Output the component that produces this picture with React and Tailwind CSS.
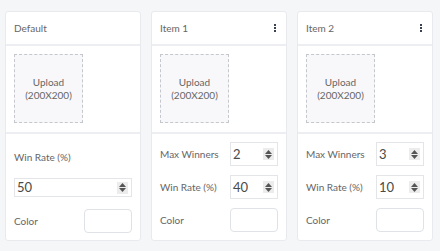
import React from "react";

function Spinner() {
  return (
    <div className="flex h-[12px] w-[11px] flex-col items-center justify-center gap-[1px] bg-[#ececec]">
      <svg width="7" height="4" viewBox="0 0 7 4"><path d="M0 4 L3.5 0 L7 4 Z" fill="#555" /></svg>
      <svg width="7" height="4" viewBox="0 0 7 4"><path d="M0 0 L3.5 4 L7 0 Z" fill="#555" /></svg>
    </div>
  );
}

function NumInput({ value, className }) {
  return (
    <div className={"flex items-center justify-between border border-[#e3e5e8] bg-white pl-[2px] pr-[3px] " + className}>
      <span className="text-[13px] leading-none text-[#4a4a4a]">{value}</span>
      <Spinner />
    </div>
  );
}

function Dots() {
  return (
    <div className="flex flex-col gap-[1px] pr-[1px]">
      <div className="h-[2px] w-[2px] bg-[#3a4250]" />
      <div className="h-[2px] w-[2px] bg-[#3a4250]" />
      <div className="h-[2px] w-[2px] bg-[#3a4250]" />
    </div>
  );
}

function Card({ title, menu, children }) {
  return (
    <div className="flex h-[230px] w-[136px] flex-col rounded-[3px] border border-[#e8eaed] bg-white">
      <div className="flex h-[34px] items-center justify-between border-b-2 border-[#eceef1] pl-[8px] pr-[9px]">
        <span className="text-[10px] text-[#666]">{title}</span>
        {menu && <Dots />}
      </div>
      <div className="border-b-2 border-[#eceef1] pb-[9px] pl-[8px] pt-[8px]">
        <div className="flex h-[69px] w-[69px] flex-col items-center justify-center border border-dashed border-[#c4c7cc] bg-[#f8f8fb] text-[10px] leading-[13px] text-[#666]">
          <span>Upload</span>
          <span>(200X200)</span>
        </div>
      </div>
      {children}
    </div>
  );
}

function ColorBox() {
  return <div className="h-[24px] w-[48px] rounded-[4px] border border-[#dfe2e6] bg-white" />;
}

export default function App() {
  return (
    <div className="h-[251px] w-[440px] bg-[#f5f6f8] pl-[5px] pt-[11px]" style={{ fontFamily: "Lato, 'Open Sans', sans-serif" }}>
      <div className="flex gap-[10px]">
        <Card title="Default">
          <div className="flex flex-1 flex-col px-[8px] pt-[16px]">
            <span className="text-[10px] text-[#666]">Win Rate (%)</span>
            <NumInput value="50" className="mt-[13px] h-[19px] w-full" />
            <div className="mt-[12px] flex items-center justify-between">
              <span className="text-[10px] text-[#666]">Color</span>
              <ColorBox />
            </div>
          </div>
        </Card>
        {[
          ["Item 1", "2", "40"],
          ["Item 2", "3", "10"],
        ].map(([t, a, b]) => (
          <Card key={t} title={t} menu>
            <div className="flex flex-1 flex-col gap-[9px] px-[8px] pt-[8px]">
              <div className="flex items-center justify-between">
                <span className="text-[10px] text-[#666]">Max Winners</span>
                <NumInput value={a} className="h-[24px] w-[48px]" />
              </div>
              <div className="flex items-center justify-between">
                <span className="text-[10px] text-[#666]">Win Rate (%)</span>
                <NumInput value={b} className="h-[24px] w-[48px]" />
              </div>
              <div className="flex items-center justify-between">
                <span className="text-[10px] text-[#666]">Color</span>
                <ColorBox />
              </div>
            </div>
          </Card>
        ))}
      </div>
    </div>
  );
}
